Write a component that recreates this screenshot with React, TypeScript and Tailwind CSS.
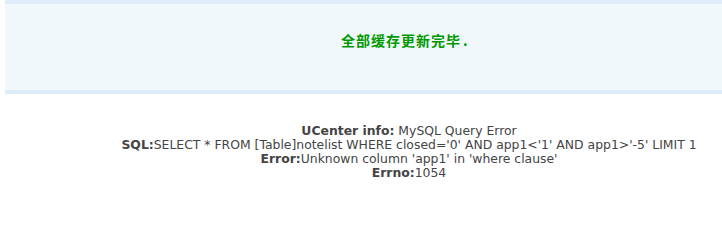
export default function App() {
  return (
    <div className="w-[722px] h-[210px] bg-white overflow-hidden">
      {/* notice box */}
      <div className="ml-[5px] h-[94px] border-y-4 border-[#deedf9] bg-[#f0f8fc]">
        <div
          className="pl-[336px] pt-[26px] text-[14px] leading-[20px] font-bold tracking-[1px] text-[#009900]"
          style={{ fontFamily: '"Noto Sans CJK SC", "DejaVu Sans", sans-serif' }}
        >
          全部缓存更新完毕<span className="ml-[2px]">.</span>
        </div>
      </div>

      {/* error message */}
      <div
        className="mt-[30px] pl-[96px] text-center text-[12.4px] leading-[14px] text-[#444444]"
        style={{ fontFamily: '"DejaVu Sans", Verdana, sans-serif' }}
      >
        <div>
          <b>UCenter info:</b> MySQL Query Error
        </div>
        <div>
          <b>SQL:</b>SELECT * FROM [Table]notelist WHERE closed='0' AND app1&lt;'1' AND app1&gt;'-5' LIMIT 1
        </div>
        <div>
          <b>Error:</b>Unknown column 'app1' in 'where clause'
        </div>
        <div>
          <b>Errno:</b>1054
        </div>
      </div>
    </div>
  );
}
